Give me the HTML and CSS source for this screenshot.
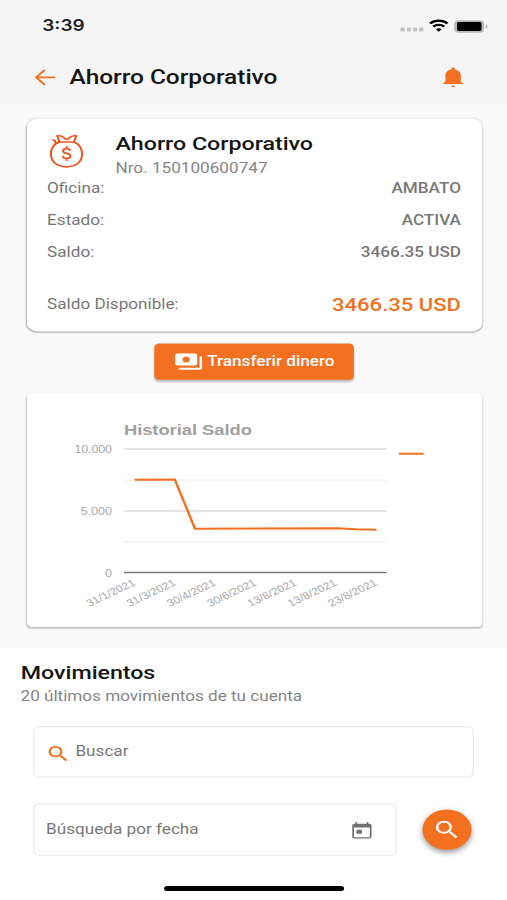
FILE: index.html
```html
<!DOCTYPE html>
<html lang="es">
<head>
<meta charset="utf-8">
<title>Ahorro Corporativo</title>
<link rel="stylesheet" href="styles.css">
</head>
<body>
<div class="app">
  <header class="top">
    <div class="status">
      <span class="clock">3:39</span>
      <svg class="status-icons" width="74" height="16" viewBox="0 0 74 16">
        <g fill="#c4c4c4"><rect x="1" y="9.5" width="3.6" height="3.8" rx="1"/><rect x="6.1" y="9.5" width="3.6" height="3.8" rx="1"/><rect x="11.1" y="9.5" width="3.6" height="3.8" rx="1"/><rect x="16.1" y="9.5" width="3.6" height="3.8" rx="1"/></g>
        <g fill="none" stroke="#000" stroke-width="2.2"><path d="M25.200 5.400a10.200 10.200 0 0 1 14.200 0"/><path d="M27.900 8.500a6.300 6.300 0 0 1 8.800 0"/></g>
        <path d="M30 11.100a3.600 3.600 0 0 1 4.600 0l-2.300 2.500z"/>
        <rect x="45.500" y="2.800" width="23.200" height="11.200" rx="3.200" fill="#b9b9b9" stroke="#b9b9b9" stroke-width="1.400"/>
        <rect x="47.200" y="4" width="20" height="8.800" rx="1.400"/>
        <path d="M70.600 6.400v4c1.800-.5 1.800-3.500 0-4z" fill="#a8a8a8"/>
      </svg>
    </div>
    <div class="bar">
      <svg class="back" width="24" height="24" viewBox="0 0 24 24" fill="none" stroke="#f37021" stroke-width="1.700" stroke-linecap="round" stroke-linejoin="round"><path d="M19.300 12H4.700M11.200 5L4.500 12l6.700 7"/></svg>
      <h1>Ahorro Corporativo</h1>
      <svg class="bell" width="24" height="24" viewBox="0 0 24 24" fill="#f37021"><path d="M13.800 20.300c0 .9-.8 1.400-1.800 1.400s-1.800-.5-1.800-1.400z"/><path d="M18.300 16.300V10.500c0-3.200-1.800-5.600-4.800-6.300v-.5c0-.8-.7-1.500-1.500-1.500s-1.500.7-1.500 1.500v.5c-3 .7-4.800 3.100-4.800 6.300v5.800L4 17.700v1h16v-1z"/></svg>
    </div>
  </header>

  <main>
    <section class="account">
      <div class="account-head">
        <svg class="bag" width="29" height="36" viewBox="0 0 29 36" fill="none" stroke="#f4511e" stroke-width="1.600" stroke-linecap="round" stroke-linejoin="round">
          <path d="M8 8.600C4 10.600 1.600 14.800 1.600 20.200c0 7.800 5 12.900 12.700 12.900S27 28 27 20.200c0-5.400-2.300-9.600-6.300-11.600"/>
          <path d="M8.600 8.400L6.700 2.200c2.600-.3 4 .1 5 1.400.9 1.200 1.500 2 2.800 2s1.900-.8 2.800-2c1-1.300 2.400-1.700 5-1.400l-1.900 6.200z"/>
          <path d="M8.600 8.600L5.200 9.500 4.900 7 3.300 6.300"/>
          <path d="M17.200 16.500c-.5-1.100-1.500-1.500-2.800-1.500-1.700 0-2.900.9-2.900 2.300 0 3.300 6 1.500 6 5 0 1.500-1.300 2.400-3.100 2.400-1.500 0-2.600-.6-3.100-1.800M14.400 13.200v1.700M14.400 24.700v1.800"/>
        </svg>
        <div>
          <h2>Ahorro Corporativo</h2>
          <p class="number">Nro. 150100600747</p>
        </div>
      </div>
      <div class="row"><span>Oficina:</span><b>AMBATO</b></div>
      <div class="row"><span>Estado:</span><b>ACTIVA</b></div>
      <div class="row"><span>Saldo:</span><b>3466.35 USD</b></div>
      <div class="row available"><span>Saldo Disponible:</span><b>3466.35 USD</b></div>
    </section>

    <button class="transfer">
      <svg width="24" height="24" viewBox="0 0 24 24" fill="#fff"><path d="M19 14V6c0-1.100-.9-2-2-2H3c-1.100 0-2 .9-2 2v8c0 1.100.9 2 2 2h14c1.100 0 2-.9 2-2zm-9-1c-1.660 0-3-1.340-3-3s1.340-3 3-3 3 1.340 3 3-1.340 3-3 3zm13-6v11c0 1.100-.9 2-2 2H4v-2h17V7h2z"/></svg>
      <span>Transferir dinero</span>
    </button>

    <section class="chart">
      <svg width="372" height="232" viewBox="21.500 392 372 232">
        <text class="chart-title" x="100.700" y="433" textLength="104.500">Historial Saldo</text>
        <g class="major"><path d="M100.700 447H315.200M100.700 508.700H315.200"/></g>
        <g class="minor"><path d="M100.700 477.900H315.200M100.700 539.200H315.200"/></g>
        <path class="base" d="M100.700 570H315.200"/>
        <path class="series" d="M109.400 477.600L142.200 477.300 158.700 526.300 274.400 525.800 290.400 527 306.900 527.300"/>
        <path class="series" d="M325.200 451.700H345.400"/>
        <g class="ylab">
          <text x="90.900" y="451" textLength="30.500">10.000</text>
          <text x="90.900" y="512.500" textLength="25.500">5.000</text>
          <text x="90.900" y="574">0</text>
        </g>
        <g class="xlab">
          <text transform="translate(110.800 582) rotate(-30)">31/1/2021</text>
          <text transform="translate(143.700 582) rotate(-30)">31/3/2021</text>
          <text transform="translate(176.600 582) rotate(-30)">30/4/2021</text>
          <text transform="translate(209.500 582) rotate(-30)">30/6/2021</text>
          <text transform="translate(242.400 582) rotate(-30)">13/8/2021</text>
          <text transform="translate(275.300 582) rotate(-30)">13/8/2021</text>
          <text transform="translate(308.200 582) rotate(-30)">23/8/2021</text>
        </g>
      </svg>
    </section>
  </main>

  <section class="moves">
    <h2>Movimientos</h2>
    <p>20 últimos movimientos de tu cuenta</p>
    <div class="field">
      <svg class="find" width="21" height="21" viewBox="0 0 24 24" fill="#f37021"><path d="M15.500 14h-.79l-.28-.27A6.471 6.471 0 0 0 16 9.500 6.500 6.500 0 1 0 9.500 16c1.610 0 3.090-.59 4.230-1.570l.27.28v.79l5 4.990L20.490 19l-4.990-5zm-6 0C7.010 14 5 11.990 5 9.500S7.010 5 9.500 5 14 7.010 14 9.500 11.990 14 9.500 14z"/></svg>
      <span>Buscar</span>
    </div>
    <div class="date-line">
      <div class="field date">
        <span>Búsqueda por fecha</span>
        <svg width="21" height="22" viewBox="0 0 24 24" fill="#707070"><path d="M19 4h-1V2h-1.500v2h-9V2H6v2H5c-1.110 0-1.990.9-1.990 2L3 19c0 1.100.89 2 2 2h14c1.100 0 2-.9 2-2V6c0-1.100-.9-2-2-2zm.400 15.400H4.600V8.500h14.800v10.900zM7 11h5v4.500H7z"/></svg>
      </div>
      <button class="fab"><svg width="24" height="24" viewBox="0 0 24 24" fill="#fff"><path d="M15.500 14h-.79l-.28-.27A6.471 6.471 0 0 0 16 9.500 6.500 6.500 0 1 0 9.500 16c1.610 0 3.090-.59 4.230-1.570l.27.28v.79l5 4.990L20.490 19l-4.990-5zm-6 0C7.010 14 5 11.990 5 9.500S7.010 5 9.500 5 14 7.010 14 9.500 11.990 14 9.500 14z"/></svg></button>
    </div>
    <div class="home"></div>
  </section>
</div>
</body>
</html>
```
FILE: styles.css
```css
* { box-sizing: border-box; margin: 0; padding: 0; }
html, body { width: 507px; height: 900px; overflow: hidden; background: #fff; }
svg { display: block; flex: none; }
h1, h2 { font-weight: 500; color: #161616; white-space: nowrap; }

/* Phone canvas of 414 x 896 points, stretched to fill the window */
.app {
  width: 414px; height: 896px;
  display: flex; flex-direction: column;
  transform: scale(1.22464, 1.00446); transform-origin: 0 0;
  font-family: Roboto, "Liberation Sans", sans-serif;
  color: #777; background: #fafafa;
}

.top { height: 103.500px; background: #f5f5f5; flex: none; }
.status { height: 51px; padding: 0 14.300px 0 34.500px; display: flex; align-items: center; justify-content: space-between; }
.clock { font: 600 15.500px/20px Inter, sans-serif; color: #222; margin-top: 1.500px; }
.bar { height: 52px; padding: 0 32px 0 25px; display: flex; align-items: center; }
.bar h1 { font-size: 20px; line-height: 24px; margin-left: 7.700px; flex: 1; letter-spacing: -.03px; }

main { height: 541.500px; flex: none; padding: 14px 20.200px 0 21.600px; display: flex; flex-direction: column; align-items: center; }
.account {
  width: 372px; height: 212px; flex: none; padding: 14px 17.300px 0 17px;
  background: #fff; border-radius: 9px;
  box-shadow: 0 1.500px 1px rgba(0,0,0,.2), 0 0 2px rgba(0,0,0,.12);
}
.account-head { display: flex; height: 45.500px; gap: 25.300px; }
.bag { margin: 1px 0 0 1.300px; }
.account h2 { font-size: 19px; line-height: 24px; margin-top: -1px; letter-spacing: -.03px; }
.number { font-size: 14px; line-height: 20px; margin-top: 2px; color: #858585; }
.row { height: 32px; display: flex; justify-content: space-between; align-items: flex-start; font-size: 14px; line-height: 21px; white-space: nowrap; }
.row b { font-weight: 500; }
.row span { margin-left: -.3px; }
.available { margin-top: 19.500px; }
.available b { font-size: 18px; color: #f37021; }

.transfer {
  margin-top: 12px; width: 163px; height: 36px; flex: none; border: 0; border-radius: 4px;
  background: #f37021; color: #fff; box-shadow: 0 1.500px 2px rgba(0,0,0,.25);
  display: flex; align-items: center; padding-left: 15.500px; gap: 3.500px;
  font: 500 14px/20px Roboto, sans-serif; white-space: nowrap;
}
.transfer span { margin-top: -2px; }

.chart { margin-top: 14.500px; width: 372px; height: 232px; flex: none; background: #fff; border-radius: 4px; box-shadow: 0 1.500px 1px rgba(0,0,0,.18), 0 0 2px rgba(0,0,0,.05); }
.chart text { font-family: "Liberation Sans", sans-serif; }
.chart-title { font-size: 15px; font-weight: 700; fill: #a0a0a0; }
.major path { stroke: #dcdcdc; stroke-width: 1.500; }
.minor path { stroke: #f0f0f0; stroke-width: 1.200; }
.base { stroke: #7a7a7a; stroke-width: 1.400; }
.series { stroke: #f37021; stroke-width: 2; fill: none; }
.ylab, .xlab { font-size: 10.300px; fill: #a8a8a8; text-anchor: end; }
.xlab { font-size: 10px; }

.moves { flex: 1; background: #fff; padding: 12.500px 27px 0 27.300px; display: flex; flex-direction: column; }
.moves h2 { font-size: 19px; line-height: 24px; margin-left: -10.300px; letter-spacing: -.05px; }
.moves p { font-size: 14px; line-height: 20px; margin: 1.300px 0 0 -10.500px; white-space: nowrap; color: #858585; letter-spacing: -.02px; }
.field { height: 51.500px; flex: none; margin-top: 20.200px; border: 1px solid #e8e8e8; border-radius: 5px; display: flex; align-items: center; font-size: 14px; white-space: nowrap; }
.field span { margin-top: -1.500px; }
.find { margin: 4px 3.700px 0 8.600px; }
.date-line { display: flex; margin-top: 25.300px; height: 52.500px; align-items: center; }
.date { width: 296.900px; height: 52.500px; margin: 0; padding: 0 17.300px 0 9.300px; justify-content: space-between; }
.date svg { margin-top: 1px; }
.fab { width: 40px; height: 40px; border: 0; border-radius: 50%; margin-left: 20.400px; background: #f37021; display: flex; align-items: center; justify-content: center; flex: none; box-shadow: 0 3px 5px rgba(0,0,0,.3), 0 1px 9px rgba(0,0,0,.12); }
.home { width: 147.500px; height: 5px; border-radius: 3px; background: #000; margin: 30px 0 0 106.500px; flex: none; }
```
